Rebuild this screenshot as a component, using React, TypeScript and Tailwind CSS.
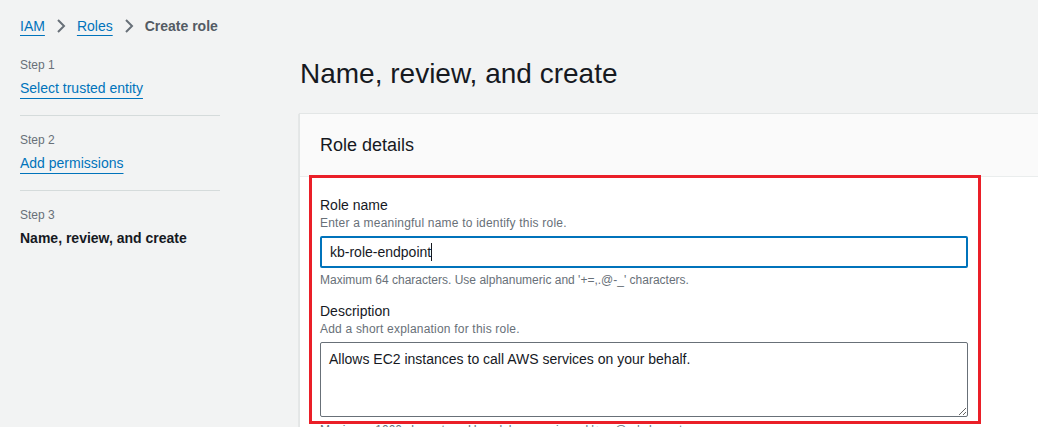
import React from "react";

const Chevron = () => (
  <svg width="16" height="16" viewBox="0 0 16 16" className="mx-[8px]">
    <polyline points="5,2 11,8 5,14" fill="none" stroke="#687078" strokeWidth="2" />
  </svg>
);

export default function App() {
  return (
    <div
      className="flex w-full h-[427px] overflow-hidden bg-[#f2f3f3] text-[#16191f]"
      style={{ fontFamily: '"Liberation Sans", Arial, sans-serif' }}
    >
      {/* left nav */}
      <div className="w-[299px] shrink-0 pl-5">
        <div className="h-[52px] flex items-center text-[14px]">
          <span className="text-[#0073bb] underline underline-offset-[4px] decoration-1">IAM</span>
          <Chevron />
          <span className="text-[#0073bb] underline underline-offset-[4px] decoration-1">Roles</span>
          <Chevron />
          <span className="font-bold text-[#545b64]">Create role</span>
        </div>
        <div className="w-[200px]">
          <div className="mt-[5px] pb-[17px] border-b border-[#d5dbdb]">
            <div className="text-[12px] leading-[16px] text-[#687078]">Step 1</div>
            <div className="mt-[5px] text-[14px] leading-[20px] text-[#0073bb] underline underline-offset-[5px] decoration-1">
              Select trusted entity
            </div>
          </div>
          <div className="pt-[16px] pb-[17px] border-b border-[#d5dbdb]">
            <div className="text-[12px] leading-[16px] text-[#687078]">Step 2</div>
            <div className="mt-[5px] text-[14px] leading-[20px] text-[#0073bb] underline underline-offset-[5px] decoration-1">
              Add permissions
            </div>
          </div>
          <div className="pt-[16px]">
            <div className="text-[12px] leading-[16px] text-[#687078]">Step 3</div>
            <div className="mt-[5px] text-[14px] leading-[20px] font-bold">Name, review, and create</div>
          </div>
        </div>
      </div>

      {/* main */}
      <div className="flex-1 min-w-0">
        <h1 className="mt-[56px] text-[28px] leading-[36px] font-normal pl-[1px]">Name, review, and create</h1>
        <div className="relative mt-[21px] w-[800px] bg-white border-l border-t border-[#e3e6e6] shadow-[0_1px_1px_0_rgba(0,28,36,0.3)]">
          <div className="h-[63px] bg-[#fafafa] border-b border-[#eaeded] flex items-center pl-[20px] text-[18px]">
            Role details
          </div>
          <div className="pl-[20px] pt-[18px] w-[668px] pb-[20px]">
            <div className="text-[14px] leading-[20px]">Role name</div>
            <div className="text-[12px] leading-[16px] text-[#687078] tracking-[0.2px]">Enter a meaningful name to identify this role.</div>
            <div className="mt-[5px] h-[32px] border-2 border-[#0073bb] rounded-[2px] flex items-center pl-[8px] text-[14px]">
              <span>kb-role-endpoint</span>
              <span className="inline-block w-px h-[18px] bg-[#16191f]" />
            </div>
            <div className="mt-[4px] text-[12px] leading-[16px] text-[#687078]">
              Maximum 64 characters. Use alphanumeric and '+=,.@-_' characters.
            </div>
            <div className="mt-[13px] text-[14px] leading-[20px]">Description</div>
            <div className="text-[12px] leading-[16px] text-[#687078] tracking-[0.2px]">Add a short explanation for this role.</div>
            <textarea
              readOnly
              value="Allows EC2 instances to call AWS services on your behalf."
              className="block mt-[5px] w-full h-[75px] border border-[#687078] rounded-[2px] px-[8px] py-[5px] text-[14px] leading-[22px] text-[#16191f] outline-none resize-y"
              style={{ fontFamily: '"Liberation Sans", Arial, sans-serif' }}
            />
            <div className="mt-[5px] text-[12px] leading-[16px] text-[#687078]">
              Maximum 1000 characters. Use alphanumeric and '+=,.@-_' characters.
            </div>
          </div>
          <div className="absolute left-[9px] top-[61px] w-[672px] h-[249px] border-[3px] border-[#ea1f28] pointer-events-none" />
        </div>
      </div>
    </div>
  );
}
